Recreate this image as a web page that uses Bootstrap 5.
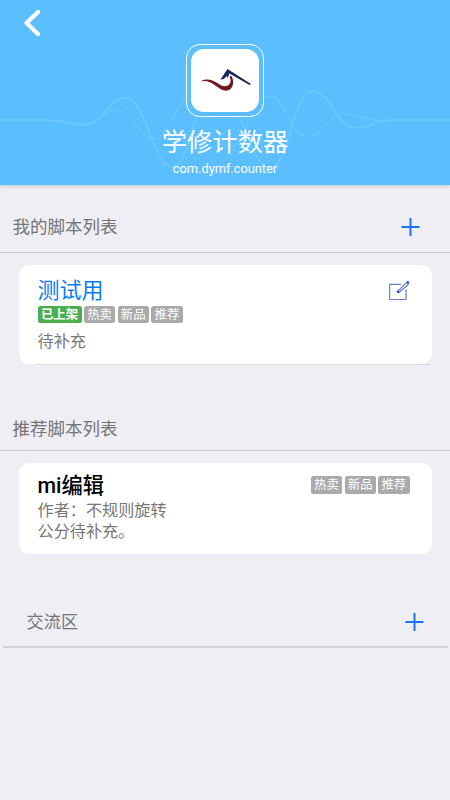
<!DOCTYPE html>
<html lang="zh-CN">
<head>
<meta charset="utf-8">
<meta name="viewport" content="width=device-width, initial-scale=1">
<title>学修计数器</title>
<link href="https://cdn.jsdelivr.net/npm/bootstrap@5.3.0/dist/css/bootstrap.min.css" rel="stylesheet">
<style>
body{background:#efeef4;font-family:Roboto,"Noto Sans CJK SC",sans-serif;color:#757575;min-height:800px;overflow-x:hidden}
.hero{height:184.5px;background:#5bbeff;box-shadow:0 1px 4px rgba(0,0,0,.2)}
.waves{left:0;top:0}
.back{left:23px;top:9px}
.app-frame{width:78px;height:73px;margin-top:43.5px;border:1.5px solid #fff;border-radius:14px;background:#5bbeff}
.app-tile{width:68px;height:63px;border-radius:13px;background:#fff}
.app-name{font-size:25.3px;line-height:30px;margin-top:11.5px}
.app-id{font-size:12.8px;line-height:18px;margin-top:1.5px}
.section-head{font-size:17.5px;line-height:26px;border-bottom:1px solid #c9c8cd;padding-left:12.5px;padding-right:30px}
.head-mine{height:68px;padding-top:18px}
.head-rec{height:39px;margin-top:48px;padding-bottom:5px}
.head-talk{height:49px;margin:44.5px 2.5px 0;padding-left:24px;padding-right:23.5px;font-size:17.2px;border-bottom:2px solid #d3d2d8}
.script-card{margin:0 18.5px 0 19px;border-radius:10px;padding:0 22px 0 18.5px}
.card-a{height:99px;margin-top:12.5px}
.card-b{height:91px;margin-top:12px;padding-top:1px}
.card-a::after{content:"";position:absolute;left:18.5px;right:1px;bottom:-1px;height:1.5px;background:#dbdbde}
.name-line{font-size:22px;line-height:28px}
.mixed{font-size:21.3px}
.blue{color:#077cf7}
.detail{font-size:16.15px;line-height:21.3px;color:#777}
.tag{height:17.5px;width:31.3px;border-radius:2.5px;background:#aaa;color:#fff;font-size:12.4px;line-height:17px;text-align:center;white-space:nowrap}
.tag-on{width:44px;background:#4cae50;font-weight:700}
.tags{gap:2.4px}
.card-a .tags{padding-top:.6px}
</style>
<script src="https://cdn.jsdelivr.net/npm/bootstrap@5.3.0/dist/js/bootstrap.bundle.min.js"></script>
</head>
<body>
<header class="hero position-relative d-flex flex-column align-items-center text-white">
  <svg class="waves position-absolute" width="450" height="184" fill="none" stroke="#68c9ff">
    <path stroke-width="1.800" d="M0 120H45C63 120 69 125 83 125C104 125 109 97.5 125 97.5C147 97.5 152 167 172 167C192 167 196 82 215 82C237 82 249 168 270 168C289 168 292 91 313 91C331 91 336 128 357 128C371 128 376 120 392 120H450"/>
    <path stroke-width="1.200" d="M45 120C65 120 71 123.500 84 123.500C99 123.500 103 110 116 110C132 110 140 139 154 139C170 139 176 95 192 95C208 95 216 147 230 147C246 147 251 96 269 96C285 96 290 136.500 307 136.500C323 136.500 328 114 345 114C360 114 371 122 384 120"/>
  </svg>
  <svg class="back position-absolute" width="20" height="30" fill="none" stroke="#fff" stroke-width="4.200" stroke-linecap="round" stroke-linejoin="round"><path d="M15 3L3.500 14L15 25"/></svg>
  <div class="app-frame position-relative d-flex align-items-center justify-content-center">
    <div class="app-tile">
      <svg class="d-block" width="68" height="63" viewBox="191 49 68 63">
        <path fill="#74151c" d="M201 81.500C206 77.500 213 80 219 84C223 87 227 87 229.500 84C231 82 231 79 229.500 77L231 75.500C234 79 234 86 230.500 89C226 93 220 89 216 86C210 81.500 206 80 201 81.500Z"/>
        <path fill="#17275c" d="M220.500 79.500L227.500 69L251 84L249.500 85L229.500 73.500L227.500 78L226.500 76L224 79Z"/>
      </svg>
    </div>
  </div>
  <div class="app-name position-relative">学修计数器</div>
  <div class="app-id position-relative">com.dymf.counter</div>
</header>
<main>
  <div class="section-head head-mine d-flex align-items-center justify-content-between">
    <span>我的脚本列表</span>
    <svg width="19" height="18" stroke="#1876f2" stroke-width="2"><path d="M.5 9H18.500M9.500 0V18"/></svg>
  </div>
  <section class="script-card card-a bg-white position-relative">
    <div class="d-flex justify-content-between">
      <div class="name-line blue pt-2 mt-1">测试用</div>
      <svg class="mt-3" width="22" height="20" viewBox="388 280 22 20" fill="none" stroke="#6782c9" stroke-width="1.200"><path d="M401 283.300H389.700V298.500H406V288.500"/><path d="M397.500 290.500L406.500 281.500L408.500 283.200L399 291.500Z"/><path stroke="#3457b5" stroke-width="2.600" d="M407 282L408.800 280.700M397.200 291.500L398.800 290.200"/></svg>
    </div>
    <div class="tags d-flex">
      <span class="tag tag-on">已上架</span><span class="tag">热卖</span><span class="tag">新品</span><span class="tag">推荐</span>
    </div>
    <div class="detail pt-2">待补充</div>
  </section>
  <div class="section-head head-rec d-flex align-items-center">推荐脚本列表</div>
  <section class="script-card card-b bg-white">
    <div class="d-flex justify-content-between">
      <div class="name-line mixed text-black fw-medium pt-2">mi编辑</div>
      <div class="tags d-flex pt-2 mt-1"><span class="tag">热卖</span><span class="tag">新品</span><span class="tag">推荐</span></div>
    </div>
    <div class="detail">作者：不规则旋转<br>公分待补充。</div>
  </section>
  <div class="section-head head-talk d-flex align-items-center justify-content-between">
    <span>交流区</span>
    <svg width="19" height="18" stroke="#1876f2" stroke-width="2"><path d="M.5 9H18.500M9.500 0V18"/></svg>
  </div>
</main>
</body>
</html>
